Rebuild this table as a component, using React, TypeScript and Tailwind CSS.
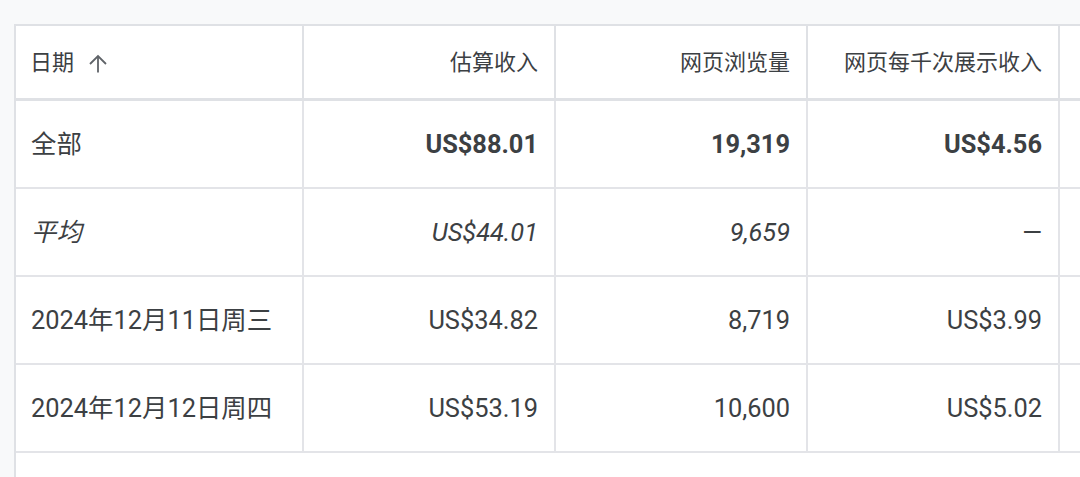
type Row = {
  label: string
  revenue: string
  views: string
  rpm: string
  kind: "total" | "avg" | "day"
}

const rows: Row[] = [
  { label: "全部", revenue: "US$88.01", views: "19,319", rpm: "US$4.56", kind: "total" },
  { label: "平均", revenue: "US$44.01", views: "9,659", rpm: "—", kind: "avg" },
  { label: "2024年12月11日周三", revenue: "US$34.82", views: "8,719", rpm: "US$3.99", kind: "day" },
  { label: "2024年12月12日周四", revenue: "US$53.19", views: "10,600", rpm: "US$5.02", kind: "day" },
]

const font = { fontFamily: '"Roboto", "Noto Sans CJK SC", sans-serif' }

function SortUp() {
  return (
    <svg width="20" height="19" viewBox="0 0 20 19" fill="none" stroke="#5f6368" strokeWidth="1.8" className="mt-[3px] shrink-0">
      <path d="M10 18.5V2" />
      <path d="M2 10L10 2L18 10" />
    </svg>
  )
}

export default function App() {
  return (
    <div className="h-[477px] w-[1080px] overflow-hidden bg-[#f8f9fa] pl-[14px] pt-[24px] text-[#3c4043]" style={font}>
      <div className="h-full border-l-2 border-t-2 border-[#dfe1e5] bg-white">
        {/* header */}
        <div className="grid grid-cols-[288px_252px_252px_252px_1fr] text-[22px]">
          <div className="flex h-[75px] items-center gap-[14px] border-b-[3px] border-r-2 border-[#dfe1e5] pl-[14px]">
            <span>日期</span>
            <SortUp />
          </div>
          <div className="flex h-[75px] items-center justify-end border-b-[3px] border-r-2 border-[#dfe1e5] pr-[16px]">估算收入</div>
          <div className="flex h-[75px] items-center justify-end border-b-[3px] border-r-2 border-[#dfe1e5] pr-[16px]">网页浏览量</div>
          <div className="flex h-[75px] items-center justify-end border-b-[3px] border-r-2 border-[#dfe1e5] pr-[16px]">网页每千次展示收入</div>
          <div className="h-[75px] border-b-[3px] border-[#dfe1e5]" />
        </div>

        {/* body */}
        {rows.map((r) => {
          const num = r.kind === "total" ? "font-bold" : r.kind === "avg" ? "italic" : ""
          const lab = r.kind === "avg" ? "italic" : ""
          return (
            <div key={r.label} className="grid grid-cols-[288px_252px_252px_252px_1fr] text-[25.4px]">
              <div className={`flex h-[88px] items-center border-b-2 border-r-2 border-[#e3e4e8] pl-[15px] ${lab}`}>{r.label}</div>
              <div className={`flex h-[88px] items-center justify-end border-b-2 border-r-2 border-[#e3e4e8] pr-[16px] ${num}`}>{r.revenue}</div>
              <div className={`flex h-[88px] items-center justify-end border-b-2 border-r-2 border-[#e3e4e8] pr-[16px] ${num}`}>{r.views}</div>
              <div className={`flex h-[88px] items-center justify-end border-b-2 border-r-2 border-[#e3e4e8] pr-[16px] ${r.kind === "total" ? "font-bold" : ""}`}>{r.rpm}</div>
              <div className="h-[88px] border-b-2 border-[#e3e4e8]" />
            </div>
          )
        })}
      </div>
    </div>
  )
}
